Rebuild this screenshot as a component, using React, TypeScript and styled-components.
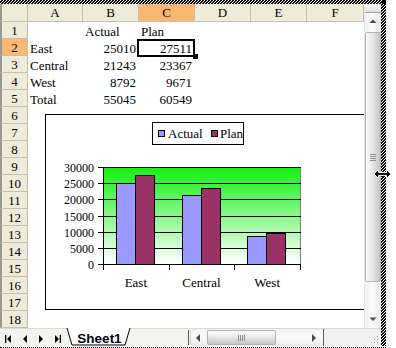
import React from "react";
import styled, { createGlobalStyle } from "styled-components";

const GlobalStyle = createGlobalStyle`
  html, body { margin: 0; padding: 0; background: #ffffff; }
  body { font-family: "Liberation Serif", "Times New Roman", serif; color: #000; }
  #root { width: 396px; height: 348px; overflow: hidden; }
`;

const HATCH =
  "repeating-linear-gradient(-45deg, #000 0px, #000 1.1px, #fff 1.1px, #fff 2.12px)";

const HEAD_BG = "#efebda";
const HEAD_LINE = "#c4c0ae";
const HEAD_ACTIVE = "#f9b871";

const Frame = styled.div`
  position: relative;
  width: 386px;
  height: 348px;
  box-sizing: border-box;
  padding: 4px 5px 1px 0;
  border-bottom: 1px dotted #000;
  &::before {
    content: "";
    position: absolute;
    left: 0;
    right: 0;
    top: 0;
    height: 4px;
    background: ${HATCH};
  }
  &::after {
    content: "";
    position: absolute;
    right: 0;
    top: 0;
    bottom: 1px;
    width: 5px;
    background: ${HATCH};
  }
`;

const CornerHandle = styled.div`
  position: absolute;
  right: 0;
  top: 0;
  width: 4px;
  height: 4px;
  background: #000;
  z-index: 2;
`;

const SideHandle = styled.div`
  position: absolute;
  right: 1px;
  top: 173px;
  width: 4px;
  height: 4px;
  background: #000;
  z-index: 2;
`;

const Cursor = styled.svg`
  position: absolute;
  left: 373px;
  top: 168px;
  z-index: 3;
`;

const Main = styled.div`
  display: grid;
  grid-template-columns: 364px 17px;
  grid-template-rows: 324px 18px;
  height: 342px;
  background: #fff;
`;

const SheetArea = styled.div`
  position: relative;
  overflow: hidden;
`;

const Grid = styled.div`
  display: grid;
  grid-template-columns: 28px 55px repeat(4, 56px) 1fr;
  grid-template-rows: 18px repeat(18, 17px);
`;

const Corner = styled.div`
  box-sizing: border-box;
  background: ${HEAD_BG};
  border-left: 2px solid #9a9a94;
  border-right: 1px solid ${HEAD_LINE};
  border-bottom: 1px solid ${HEAD_LINE};
`;

const ColHead = styled.div<{ $active?: boolean }>`
  box-sizing: border-box;
  display: flex;
  align-items: center;
  justify-content: center;
  background: ${(p) => (p.$active ? HEAD_ACTIVE : HEAD_BG)};
  border-right: 1px solid ${HEAD_LINE};
  border-bottom: 1px solid ${HEAD_LINE};
  font-size: 13px;
  line-height: 1;
`;

const RowHead = styled.div<{ $active?: boolean }>`
  box-sizing: border-box;
  display: flex;
  align-items: center;
  justify-content: center;
  padding-top: 1px;
  background: ${(p) => (p.$active ? HEAD_ACTIVE : HEAD_BG)};
  border-left: 2px solid #9a9a94;
  border-right: 1px solid ${HEAD_LINE};
  border-bottom: 1px solid ${HEAD_LINE};
  font-size: 13px;
  line-height: 1;
`;

const Cell = styled.div<{ $num?: boolean; $selected?: boolean }>`
  box-sizing: border-box;
  display: flex;
  align-items: flex-end;
  justify-content: ${(p) => (p.$num ? "flex-end" : "flex-start")};
  padding: 0 3px 0 2px;
  font-size: 13px;
  line-height: 15px;
  white-space: nowrap;
  position: ${(p) => (p.$selected ? "relative" : "static")};
`;

const Selection = styled.div`
  position: absolute;
  left: -2px;
  top: 0px;
  right: 0px;
  bottom: -1px;
  border: 2px solid #000;
  pointer-events: none;
  z-index: 1;
`;

const FillHandle = styled.div`
  position: absolute;
  right: -3px;
  bottom: -3px;
  width: 5px;
  height: 5px;
  background: #000;
  z-index: 1;
`;

const ChartBox = styled.div`
  position: absolute;
  left: 45px;
  top: 110px;
  width: 342px;
  height: 196px;
  box-sizing: border-box;
  border: 1px solid #000;
  background: #fff;
  z-index: 2;
  svg {
    display: block;
  }
`;

const VScroll = styled.div`
  display: flex;
  flex-direction: column;
  box-sizing: border-box;
  border-left: 1px solid #e6e6e6;
  background: linear-gradient(to right, #f1f1f1, #fbfbfb 45%, #e9e9e9);
`;

const SplitBox = styled.div`
  height: 9px;
  box-sizing: border-box;
  background: linear-gradient(#f7f7f7, #dedede);
  border-bottom: 1px solid #a3a3a3;
`;

const ArrowBtn = styled.div<{ $w?: number; $h?: number }>`
  flex: none;
  width: ${(p) => (p.$w ? `${p.$w}px` : "auto")};
  height: ${(p) => (p.$h ? `${p.$h}px` : "auto")};
  display: flex;
  align-items: center;
  justify-content: center;
`;

const VThumb = styled.div`
  margin: 2px 0 0 0;
  height: 250px;
  box-sizing: border-box;
  border: 1px solid #b3b3b3;
  border-radius: 2px;
  background: linear-gradient(to right, #fbfbfb, #e6e6e6 50%, #c4c4c4);
  display: flex;
  flex-direction: column;
  align-items: center;
  justify-content: center;
  gap: 1px;
`;

const GripLine = styled.span<{ $vertical?: boolean }>`
  display: block;
  width: ${(p) => (p.$vertical ? "1px" : "6px")};
  height: ${(p) => (p.$vertical ? "6px" : "1px")};
  background: #8d8d8d;
`;

const Track = styled.div`
  flex: 1;
`;

const TabBar = styled.div`
  grid-column: 1 / -1;
  display: flex;
  align-items: stretch;
  height: 18px;
  background: #f4f3ef;
  border-top: 1px solid #d9d9d4;
  box-sizing: border-box;
`;

const NavGroup = styled.div`
  width: 64px;
  display: flex;
  padding-left: 1px;
`;

const NavBtn = styled.div`
  width: 16px;
  display: flex;
  align-items: center;
  justify-content: center;
  padding-top: 2px;
`;

const Tab = styled.div`
  position: relative;
  width: 67px;
  display: flex;
  align-items: flex-end;
  justify-content: center;
  svg {
    position: absolute;
    left: 0;
    top: -1px;
  }
`;

const TabLabel = styled.span`
  position: relative;
  font-family: "Liberation Sans", Arial, sans-serif;
  font-weight: bold;
  font-size: 13.5px;
  line-height: 15px;
  padding-left: 2px;
`;

const Spacer = styled.div`
  flex: 1;
`;

const Splitter = styled.div`
  width: 3px;
  box-sizing: border-box;
  border-left: 1px solid #5a5a5a;
  border-right: 1px solid #cfcfcf;
  margin: 1px 0;
`;

const HScroll = styled.div`
  width: 133px;
  display: flex;
  align-items: stretch;
  box-sizing: border-box;
  background: linear-gradient(#f1f1f1, #fbfbfb 45%, #e9e9e9);
  border-right: 1px solid #5a5a5a;
`;

const HThumb = styled.div`
  margin: 1px 0 1px 2px;
  width: 69px;
  box-sizing: border-box;
  border: 1px solid #b3b3b3;
  border-radius: 2px;
  background: linear-gradient(#fbfbfb, #e6e6e6 50%, #c4c4c4);
  display: flex;
  align-items: center;
  justify-content: center;
  gap: 1px;
`;

const SizeGrip = styled.div`
  flex: 1;
  display: flex;
  align-items: flex-end;
  justify-content: flex-end;
  padding: 0 2px 2px 0;
  background: #f1f1f1;
`;

const COLS = ["A", "B", "C", "D", "E", "F"];
const DATA: string[][] = [
  ["", "Actual", "Plan"],
  ["East", "25010", "27511"],
  ["Central", "21243", "23367"],
  ["West", "8792", "9671"],
  ["Total", "55045", "60549"],
];

const SERIES = [
  { name: "East", actual: 25010, plan: 27511 },
  { name: "Central", actual: 21243, plan: 23367 },
  { name: "West", actual: 8792, plan: 9671 },
];

const ACTUAL = "#9999ff";
const PLAN = "#993366";

const PX0 = 103;
const PX1 = 300;
const PY0 = 167;
const PY1 = 264;
const yOf = (v: number) => PY1 - (v / 30000) * (PY1 - PY0);

const Tri: React.FC<{ dir: "l" | "r" | "u" | "d"; bar?: "l" | "r"; color?: string }> = ({
  dir,
  bar,
  color = "#000",
}) => {
  if (dir === "u" || dir === "d") {
    const pts = dir === "u" ? "0.5,4 7.5,4 4,0.5" : "0.5,0.5 7.5,0.5 4,4";
    return (
      <svg width="8" height="5" viewBox="0 0 8 5">
        <polygon points={pts} fill={color} />
      </svg>
    );
  }
  const pts = dir === "l" ? "6,0 6,8 2,4" : "2,0 2,8 6,4";
  return (
    <svg width="8" height="8" viewBox="0 0 8 8">
      <polygon points={pts} fill={color} />
      {bar === "l" && <rect x="0" y="0" width="1.3" height="8" fill={color} />}
      {bar === "r" && <rect x="6.7" y="0" width="1.3" height="8" fill={color} />}
    </svg>
  );
};

const Chart: React.FC = () => {
  const catW = (PX1 - PX0) / 3;
  return (
    <svg width="340" height="194" viewBox="46 115 340 194" fontFamily="'Liberation Serif', 'Times New Roman', serif">
      <defs>
        <linearGradient id="plotFill" x1="0" y1="0" x2="0" y2="1">
          <stop offset="0" stopColor="#12ef12" />
          <stop offset="1" stopColor="#ffffff" />
        </linearGradient>
      </defs>
      <rect x={PX0} y={PY0} width={PX1 - PX0} height={PY1 - PY0} fill="url(#plotFill)" />
      <g shapeRendering="crispEdges">
        <line x1={PX1 + 0.5} y1={PY0} x2={PX1 + 0.5} y2={PY1} stroke="#808080" />
        {[5000, 10000, 15000, 20000, 25000, 30000].map((v) => {
          const y = Math.round(yOf(v)) + 0.5;
          return <line key={v} x1={PX0} y1={y} x2={PX1 + 1} y2={y} stroke="#000" />;
        })}
        {SERIES.map((s, i) => {
          const c = PX0 + i * catW;
          const ax = Math.round(c + 13);
          const px = ax + 19;
          const ay = Math.round(yOf(s.actual));
          const py = Math.round(yOf(s.plan));
          return (
            <g key={s.name} stroke="#000">
              <rect x={ax + 0.5} y={ay + 0.5} width={19} height={PY1 - ay} fill={ACTUAL} />
              <rect x={px + 0.5} y={py + 0.5} width={19} height={PY1 - py} fill={PLAN} />
            </g>
          );
        })}
        <line x1={PX0 + 0.5} y1={PY0} x2={PX0 + 0.5} y2={PY1 + 1} stroke="#000" />
        <line x1={PX0} y1={PY1 + 0.5} x2={PX1 + 1} y2={PY1 + 0.5} stroke="#000" />
        {[0, 5000, 10000, 15000, 20000, 25000, 30000].map((v) => {
          const y = Math.round(yOf(v)) + 0.5;
          return <line key={v} x1={98} y1={y} x2={PX0} y2={y} stroke="#000" />;
        })}
        {[0, 1, 2, 3].map((i) => {
          const x = Math.round(PX0 + i * catW) + 0.5;
          return <line key={i} x1={x} y1={PY1} x2={x} y2={PY1 + 6} stroke="#000" />;
        })}
      </g>
      {[0, 5000, 10000, 15000, 20000, 25000, 30000].map((v) => (
        <text key={v} x={94} y={Math.round(yOf(v)) + 4.5} fontSize="12" textAnchor="end">
          {v}
        </text>
      ))}
      {SERIES.map((s, i) => (
        <text key={s.name} x={PX0 + (i + 0.5) * catW} y={287} fontSize="13" textAnchor="middle">
          {s.name}
        </text>
      ))}
      <g shapeRendering="crispEdges">
        <rect x={152.5} y={122.5} width={91} height={22} fill="#fff" stroke="#000" />
        <rect x={158.5} y={130.5} width={6} height={6} fill={ACTUAL} stroke="#000" />
        <rect x={211.5} y={130.5} width={6} height={6} fill={PLAN} stroke="#000" />
      </g>
      <text x={168} y={138} fontSize="13">Actual</text>
      <text x={220} y={138} fontSize="13">Plan</text>
    </svg>
  );
};

export default function App() {
  return (
    <>
      <GlobalStyle />
      <Frame>
        <CornerHandle />
        <SideHandle />
        <Cursor width="20" height="12" viewBox="0 0 20 12">
          <path
            d="M1,6 L5.5,1.5 L5.5,4.5 L13.5,4.5 L13.5,1.5 L18,6 L13.5,10.5 L13.5,7.5 L5.5,7.5 L5.5,10.5 Z"
            fill="#000"
            stroke="#fff"
            strokeWidth="1"
          />
        </Cursor>
        <Main>
          <SheetArea>
            <Grid>
              <Corner />
              {COLS.map((c) => (
                <ColHead key={c} $active={c === "C"}>
                  {c}
                </ColHead>
              ))}
              {Array.from({ length: 18 }).map((_, r) => (
                <React.Fragment key={r}>
                  <RowHead $active={r === 1}>{r + 1}</RowHead>
                  {COLS.map((c, ci) => {
                    const v = DATA[r]?.[ci] ?? "";
                    const num = /^\d+$/.test(v);
                    const selected = r === 1 && ci === 2;
                    return (
                      <Cell key={c} $num={num} $selected={selected}>
                        {v}
                        {selected && (
                          <>
                            <Selection />
                            <FillHandle />
                          </>
                        )}
                      </Cell>
                    );
                  })}
                </React.Fragment>
              ))}
            </Grid>
            <ChartBox>
              <Chart />
            </ChartBox>
          </SheetArea>
          <VScroll>
            <SplitBox />
            <ArrowBtn $h={17}>
              <Tri dir="u" color="#4a4a4a" />
            </ArrowBtn>
            <VThumb>
              <GripLine />
              <GripLine />
              <GripLine />
              <GripLine />
            </VThumb>
            <Track />
            <ArrowBtn $h={17}>
              <Tri dir="d" color="#4a4a4a" />
            </ArrowBtn>
          </VScroll>
          <TabBar>
            <NavGroup>
              <NavBtn>
                <Tri dir="l" bar="l" />
              </NavBtn>
              <NavBtn>
                <Tri dir="l" />
              </NavBtn>
              <NavBtn>
                <Tri dir="r" />
              </NavBtn>
              <NavBtn>
                <Tri dir="r" bar="r" />
              </NavBtn>
            </NavGroup>
            <Tab>
              <svg width="67" height="18" viewBox="0 0 67 18">
                <polygon points="2,0 7,17 60,17 65,0" fill="#fff" />
                <polyline points="2,0 7,17 60,17 65,0" fill="none" stroke="#000" strokeWidth="1" />
              </svg>
              <TabLabel>Sheet1</TabLabel>
            </Tab>
            <Spacer />
            <Splitter />
            <HScroll>
              <ArrowBtn $w={14}>
                <Tri dir="l" color="#4a4a4a" />
              </ArrowBtn>
              <HThumb>
                <GripLine $vertical />
                <GripLine $vertical />
                <GripLine $vertical />
                <GripLine $vertical />
              </HThumb>
              <Track />
              <ArrowBtn $w={18}>
                <Tri dir="r" color="#4a4a4a" />
              </ArrowBtn>
            </HScroll>
            <SizeGrip>
              <svg width="10" height="10" viewBox="0 0 10 10">
                {[
                  [8, 2], [8, 5], [8, 8], [5, 5], [5, 8], [2, 8],
                ].map(([x, y], i) => (
                  <rect key={i} x={x} y={y} width="1" height="1" fill="#9a9a9a" />
                ))}
              </svg>
            </SizeGrip>
          </TabBar>
        </Main>
      </Frame>
    </>
  );
}
